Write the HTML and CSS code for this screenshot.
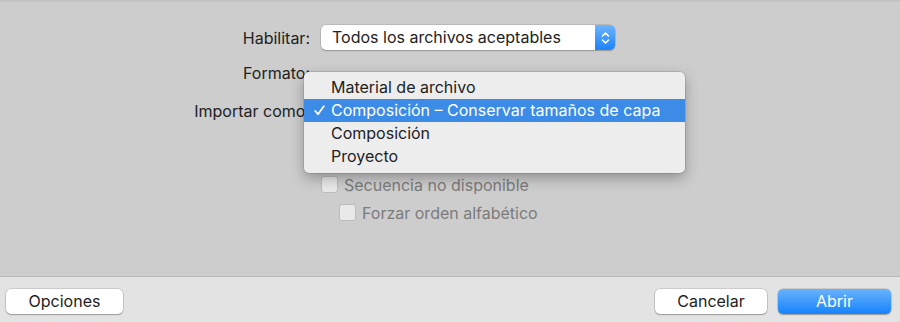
FILE: index.html
```html
<!DOCTYPE html>
<html lang="es">
<head>
    <meta charset="UTF-8">
    <title>Importar archivo</title>
    <link rel="stylesheet" href="styles.css">
</head>
<body>
    <div class="dialog">
        <div class="options">
            <div class="row row-enable">
                <span class="label">Habilitar:</span>
                <div class="popup">
                    <span class="popup-text">Todos los archivos aceptables</span>
                    <span class="popup-arrows">
                        <svg width="9" height="14" viewBox="0 0 9 14">
                            <path d="M1.5 5 L4.5 2 L7.5 5 M1.5 9 L4.5 12 L7.5 9" fill="none" stroke="#fff" stroke-width="1.6" stroke-linecap="round" stroke-linejoin="round"/>
                        </svg>
                    </span>
                </div>
            </div>
            <div class="row row-format">
                <span class="label">Formato:</span>
            </div>
            <div class="row row-import">
                <span class="label">Importar como:</span>
            </div>
            <div class="row row-hidden"></div>
            <div class="row row-check">
                <span class="label"></span>
                <label class="check"><span class="box"></span>Secuencia no disponible</label>
            </div>
            <div class="row row-check2">
                <span class="label"></span>
                <label class="check indent"><span class="box"></span>Forzar orden alfabético</label>
            </div>

            <ul class="menu">
                <li>Material de archivo</li>
                <li class="selected">
                    <svg class="tick" width="11" height="11" viewBox="0 0 11 11">
                        <path d="M1.2 6 L4 9.2 L9.8 1.2" fill="none" stroke="#fff" stroke-width="1.8" stroke-linecap="round" stroke-linejoin="round"/>
                    </svg>Composición – Conservar tamaños de capa
                </li>
                <li>Composición</li>
                <li>Proyecto</li>
            </ul>
        </div>

        <div class="footer">
            <button class="btn">Opciones</button>
            <div class="spacer"></div>
            <button class="btn btn-cancel">Cancelar</button>
            <button class="btn btn-primary">Abrir</button>
        </div>
    </div>
</body>
</html>
```

FILE: styles.css
```css
body { margin: 0; font-family: Inter, "Open Sans", sans-serif; font-size: 16px; color: #222; background: #cdcdcd; }
.dialog { width: 900px; height: 322px; display: flex; flex-direction: column; }
.options { position: relative; flex: 1; border-top: 2px solid #c3c3c3; padding-top: 23px; border-bottom: 1px solid #b9b9b9; }
.row { display: grid; grid-template-columns: 310px 1fr; column-gap: 11px; align-items: center; height: 25px; }
.label { text-align: right; }
.row-format { margin-top: 10px; }
.row-import { margin-top: 13px; }
.row-hidden { margin-top: 13px; }
.row-check { margin-top: 11px; }
.row-check2 { margin-top: 3px; }

.popup { width: 294px; height: 25px; display: flex; background: #fff; border-radius: 5px; box-shadow: 0 0 0 0.5px rgba(0,0,0,0.18), 0 1px 1.5px rgba(0,0,0,0.2); overflow: hidden; }
.popup-text { flex: 1; padding-left: 11px; line-height: 25px; }
.popup-arrows { width: 20px; display: flex; align-items: center; justify-content: center; background: linear-gradient(#6db4fb, #1b83fb); }

.check { display: flex; align-items: center; gap: 6px; color: #7b7b7b; }
.check.indent { margin-left: 18px; }
.box { width: 15px; height: 15px; border-radius: 3px; background: #e9e9e9; border: 1px solid #bcbcbc; }

.menu { position: absolute; left: 304px; top: 70px; width: 381px; margin: 0; padding: 4px 0 5px; list-style: none; background: #ededee; border-radius: 5px; box-shadow: 0 0 0 0.5px rgba(0,0,0,0.2), 0 5px 14px rgba(0,0,0,0.3); }
.menu li { position: relative; height: 23px; line-height: 23px; padding-left: 27px; color: #222; }
.menu li.selected { background: #3c8be6; color: #fff; }
.tick { position: absolute; left: 10px; top: 6px; }

.footer { height: 45px; background: #e3e3e3; display: flex; align-items: center; padding: 0 9px 0 6px; gap: 11px; }
.spacer { flex: 1; }
.btn { font: inherit; color: #222; width: 117px; height: 25px; border: none; border-radius: 5px; background: #fff; box-shadow: 0 0 0 0.5px rgba(0,0,0,0.2), 0 1px 1.5px rgba(0,0,0,0.25); margin-top: 3px; }
.btn-cancel { width: 112px; }
.btn-primary { width: 113px; color: #fff; background: linear-gradient(#69b2fb, #1583fd); }
```
